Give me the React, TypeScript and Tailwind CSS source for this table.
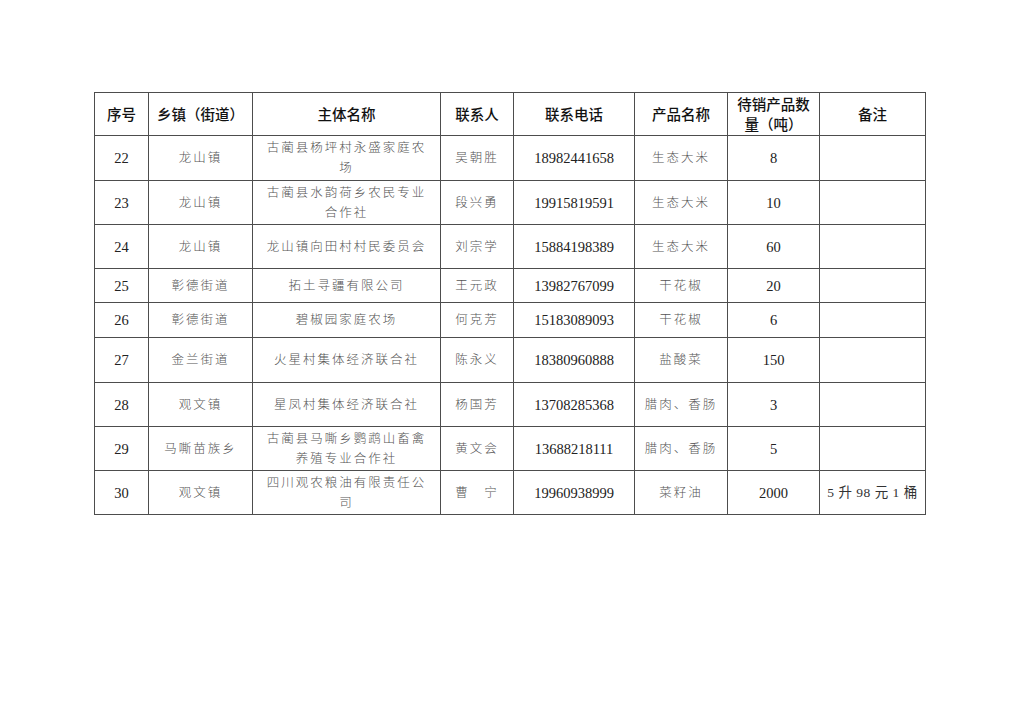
import React from "react";

type Row = {
  no: string;
  town: string;
  name: string[];
  contact: string;
  phone: string;
  product: string;
  qty: string;
  note?: string;
  h: string;
};

const rows: Row[] = [
  { no: "22", town: "龙山镇", name: ["古蔺县杨坪村永盛家庭农", "场"], contact: "吴朝胜", phone: "18982441658", product: "生态大米", qty: "8", h: "h-[45px]" },
  { no: "23", town: "龙山镇", name: ["古蔺县水韵荷乡农民专业", "合作社"], contact: "段兴勇", phone: "19915819591", product: "生态大米", qty: "10", h: "h-[44px]" },
  { no: "24", town: "龙山镇", name: ["龙山镇向田村村民委员会"], contact: "刘宗学", phone: "15884198389", product: "生态大米", qty: "60", h: "h-[44px]" },
  { no: "25", town: "彰德街道", name: ["拓土寻疆有限公司"], contact: "王元政", phone: "13982767099", product: "干花椒", qty: "20", h: "h-[34px]" },
  { no: "26", town: "彰德街道", name: ["碧椒园家庭农场"], contact: "何克芳", phone: "15183089093", product: "干花椒", qty: "6", h: "h-[35px]" },
  { no: "27", town: "金兰街道", name: ["火星村集体经济联合社"], contact: "陈永义", phone: "18380960888", product: "盐酸菜", qty: "150", h: "h-[45px]" },
  { no: "28", town: "观文镇", name: ["星凤村集体经济联合社"], contact: "杨国芳", phone: "13708285368", product: "腊肉、香肠", qty: "3", h: "h-[44px]" },
  { no: "29", town: "马嘶苗族乡", name: ["古蔺县马嘶乡鹦鹉山畜禽", "养殖专业合作社"], contact: "黄文会", phone: "13688218111", product: "腊肉、香肠", qty: "5", h: "h-[44px]" },
  { no: "30", town: "观文镇", name: ["四川观农粮油有限责任公", "司"], contact: "曹　宁", phone: "19960938999", product: "菜籽油", qty: "2000", note: "5 升 98 元 1 桶", h: "h-[44px]" },
];

// header cells: bold-ish black sans
const th =
  "border border-[#4d4d4d] px-1 text-center align-middle font-medium text-[14.5px] leading-[20px] text-[#111] [text-spacing-trim:space-all]";
// body chinese: light grey, spaced
const cn = "font-light text-[12.5px] tracking-[2px] text-[#555]";
const td = "border border-[#4d4d4d] px-1 text-center align-middle leading-[20px]";
const num = "text-[14.5px] text-[#222]";

export default function App() {
  return (
    <div className="min-h-[724px] w-[1024px] bg-white pl-[94px] pt-[92px] font-['Liberation_Serif','Noto_Sans_CJK_SC',serif]">
      <table className="w-[831px] table-fixed border-collapse">
        <colgroup>
          <col className="w-[54px]" />
          <col className="w-[104px]" />
          <col className="w-[188px]" />
          <col className="w-[73px]" />
          <col className="w-[121px]" />
          <col className="w-[93px]" />
          <col className="w-[92px]" />
          <col className="w-[106px]" />
        </colgroup>
        <thead className="font-['Noto_Sans_CJK_SC',sans-serif]">
          <tr className="h-[43px]">
            <th className={th}>序号</th>
            <th className={th}>乡镇（街道）</th>
            <th className={th}>主体名称</th>
            <th className={th}>联系人</th>
            <th className={th}>联系电话</th>
            <th className={th}>产品名称</th>
            <th className={th}>
              待销产品数
              <br />
              量（吨）
            </th>
            <th className={th}>备注</th>
          </tr>
        </thead>
        <tbody>
          {rows.map((r) => (
            <tr key={r.no} className={r.h}>
              <td className={`${td} ${num}`}>{r.no}</td>
              <td className={`${td} ${cn}`}>{r.town}</td>
              <td className={`${td} ${cn}`}>
                {r.name.map((line, i) => (
                  <div key={i}>{line}</div>
                ))}
              </td>
              <td className={`${td} ${cn}`}>{r.contact}</td>
              <td className={`${td} ${num}`}>{r.phone}</td>
              <td className={`${td} ${cn}`}>{r.product}</td>
              <td className={`${td} ${num}`}>{r.qty}</td>
              <td className={`${td} whitespace-nowrap text-[13.5px] tracking-[0.5px] text-[#333]`}>{r.note ?? ""}</td>
            </tr>
          ))}
        </tbody>
      </table>
    </div>
  );
}
